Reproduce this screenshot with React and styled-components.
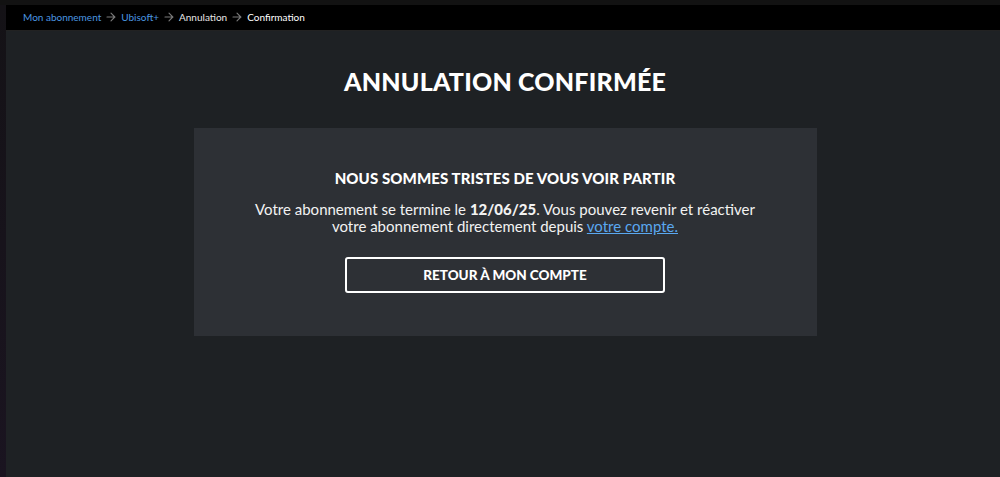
import React from 'react';
import styled, { createGlobalStyle } from 'styled-components';

const GlobalStyle = createGlobalStyle`
  html, body {
    margin: 0;
    padding: 0;
    background: #151317;
    font-family: "Lato", "Noto Sans", sans-serif;
  }
  #root {
    min-height: 477px;
  }
`;

const crumbs = [
  { label: 'Mon abonnement', link: true },
  { label: 'Ubisoft+', link: true },
  { label: 'Annulation', link: false },
  { label: 'Confirmation', link: false, current: true },
];

function Arrow() {
  return (
    <ArrowIcon width="10" height="10" viewBox="0 0 10 10" fill="none">
      <path d="M1 5h8M5 1.2l3.8 3.8L5 8.8" stroke="currentColor" strokeWidth="1.1" strokeLinecap="round" strokeLinejoin="round" />
    </ArrowIcon>
  );
}

export default function App() {
  return (
    <>
      <GlobalStyle />
      <Page>
        <TopStrip />
        <Body>
          <SideStrip />
          <Main>
            <Breadcrumb>
              {crumbs.map((c, i) => (
                <React.Fragment key={c.label}>
                  {i > 0 && <Arrow />}
                  <Crumb $link={c.link} $current={c.current}>{c.label}</Crumb>
                </React.Fragment>
              ))}
            </Breadcrumb>
            <Content>
              <Title>ANNULATION CONFIRMÉE</Title>
              <Card>
                <CardTitle>NOUS SOMMES TRISTES DE VOUS VOIR PARTIR</CardTitle>
                <Text>
                  Votre abonnement se termine le <strong>12/06/25</strong>. Vous pouvez revenir et réactiver
                  <br />
                  votre abonnement directement depuis <TextLink href="#">votre compte.</TextLink>
                </Text>
                <OutlineButton>RETOUR À MON COMPTE</OutlineButton>
              </Card>
            </Content>
          </Main>
        </Body>
      </Page>
    </>
  );
}

const Page = styled.div`
  width: 1000px;
  height: 477px;
  display: flex;
  flex-direction: column;
  overflow: hidden;
`;

const TopStrip = styled.div`
  height: 5px;
  background: #121212;
  flex-shrink: 0;
`;

const Body = styled.div`
  flex: 1;
  display: flex;
`;

const SideStrip = styled.div`
  width: 6px;
  background: linear-gradient(#141216, #1a1420);
  flex-shrink: 0;
`;

const Main = styled.div`
  flex: 1;
  display: flex;
  flex-direction: column;
  background: #1e2124;
`;

const Breadcrumb = styled.nav`
  height: 26px;
  background: #000;
  display: flex;
  align-items: center;
  padding-left: 17px;
  padding-bottom: 2px;
  box-sizing: border-box;
  gap: 5px;
  border-bottom: 1px solid #222;
`;

const Crumb = styled.span`
  font-size: 10px;
  color: ${p => (p.$link ? '#4b97e0' : p.$current ? '#ffffff' : '#e6e6e6')};
`;

const ArrowIcon = styled.svg`
  color: #7a7a7a;
`;

const Content = styled.main`
  display: flex;
  flex-direction: column;
  align-items: center;
  padding-left: 4px;
`;

const Title = styled.h1`
  margin: 35px 0 0;
  font-size: 25px;
  font-weight: 900;
  color: #fff;
  letter-spacing: 0.2px;
  line-height: 30px;
`;

const Card = styled.section`
  margin-top: 32px;
  width: 623px;
  height: 208px;
  box-sizing: border-box;
  background: #2d3035;
  display: flex;
  flex-direction: column;
  align-items: center;
  padding-top: 40px;
`;

const CardTitle = styled.h2`
  margin: 0;
  font-size: 15px;
  font-weight: 900;
  color: #fff;
  line-height: 20px;
  letter-spacing: 0.1px;
`;

const Text = styled.p`
  margin: 13px 0 0;
  font-size: 15px;
  line-height: 17px;
  color: #f2f2f2;
  text-align: center;

  strong {
    font-weight: 900;
  }
`;

const TextLink = styled.a`
  color: #5aa8f0;
  text-decoration: underline;
`;

const OutlineButton = styled.button`
  margin-top: 22px;
  width: 320px;
  height: 36px;
  background: transparent;
  border: 2px solid #fff;
  border-radius: 3px;
  color: #fff;
  font-family: inherit;
  font-size: 13.5px;
  font-weight: 900;
  cursor: pointer;
`;
